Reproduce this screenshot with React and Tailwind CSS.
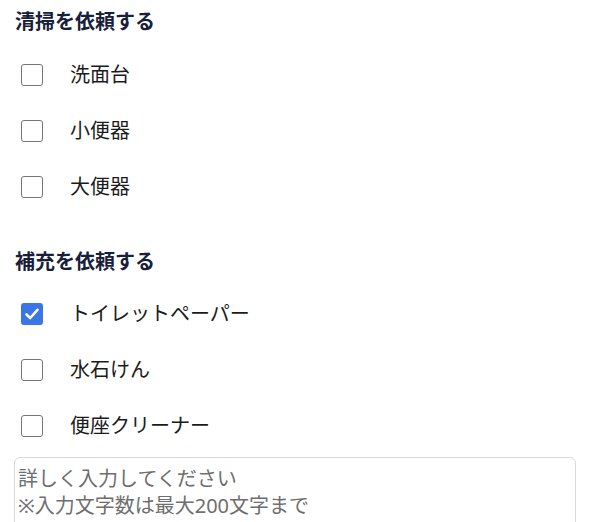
import React from "react";

const font = { fontFamily: '"Noto Sans", "Noto Sans CJK JP", sans-serif' };

function Box({ checked }) {
  if (checked) {
    return (
      <span className="flex h-[22px] w-[22px] items-center justify-center rounded-[3px] bg-[#3a76e6]">
        <svg width="16" height="16" viewBox="0 0 16 16" fill="none">
          <path d="M2.5 8.5 L6.2 12 L13.5 3.8" stroke="white" strokeWidth="2.6" strokeLinecap="round" strokeLinejoin="round" />
        </svg>
      </span>
    );
  }
  return <span className="block h-[22px] w-[22px] rounded-[3px] border-[1.5px] border-[#767676] bg-white" />;
}

function Row({ label, checked }) {
  return (
    <label className="flex h-[56px] items-center">
      <span className="ml-[6px] mr-[27px]">
        <Box checked={checked} />
      </span>
      <span className="text-[20px] leading-[28px] text-[#1b1b1b]">{label}</span>
    </label>
  );
}

export default function App() {
  return (
    <div className="w-[590px] h-[522px] overflow-hidden bg-white px-[15px] pt-[8px]" style={font}>
      <h2 className="text-[20px] font-bold leading-[28px] text-[#17203a]">清掃を依頼する</h2>
      <div className="mt-[11px]">
        <Row label="洗面台" />
        <Row label="小便器" />
        <Row label="大便器" />
      </div>
      <h2 className="mt-[33px] text-[20px] font-bold leading-[28px] text-[#17203a]">補充を依頼する</h2>
      <div className="mt-[10px]">
        <Row label="トイレットペーパー" checked />
        <Row label="水石けん" />
        <Row label="便座クリーナー" />
      </div>
      <textarea
        className="mt-[3px] -ml-px block h-[120px] w-[562px] resize-none rounded-[6px] border border-[#d9d9d9] px-[3px] pt-[7px] text-[20px] leading-[27px] text-[#333] placeholder:text-[#6e6e6e] outline-none"
        style={font}
        placeholder={"詳しく入力してください\n※入力文字数は最大200文字まで"}
      />
    </div>
  );
}
